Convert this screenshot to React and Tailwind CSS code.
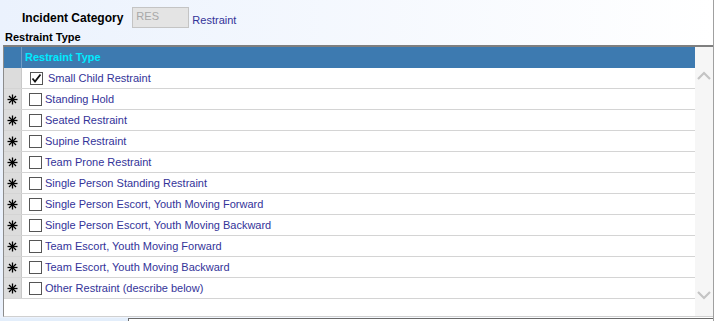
const rows = [
  { label: 'Small Child Restraint', checked: true },
  { label: 'Standing Hold' },
  { label: 'Seated Restraint' },
  { label: 'Supine Restraint' },
  { label: 'Team Prone Restraint' },
  { label: 'Single Person Standing Restraint' },
  { label: 'Single Person Escort, Youth Moving Forward' },
  { label: 'Single Person Escort, Youth Moving Backward' },
  { label: 'Team Escort, Youth Moving Forward' },
  { label: 'Team Escort, Youth Moving Backward' },
  { label: 'Other Restraint (describe below)' },
];

const NewRowMark = () => (
  <svg width="11" height="11" viewBox="0 0 11 11" stroke="#000" strokeWidth="1.3">
    <line x1="5.5" y1="0.5" x2="5.5" y2="10.5" />
    <line x1="0.5" y1="5.5" x2="10.5" y2="5.5" />
    <line x1="2" y1="2" x2="9" y2="9" />
    <line x1="9" y1="2" x2="2" y2="9" />
  </svg>
);

const Check = ({ checked }) => (
  <div className="w-[13px] h-[13px] border border-[#555] bg-white flex items-center justify-center">
    {checked && (
      <svg width="11" height="11" viewBox="0 0 11 11">
        <path d="M1.5 5.5 L4 8.5 L9.5 1.5" fill="none" stroke="#111" strokeWidth="1.8" />
      </svg>
    )}
  </div>
);

const App = () => {
  return (
    <div className="w-[717px] h-[321px] overflow-hidden flex font-['Liberation_Sans',Arial,sans-serif] bg-white">
      <div className="w-[714px] border-r border-[#a0a0a0] bg-gradient-to-r from-[#ebf2fd] to-white flex flex-col">
        {/* Incident category */}
        <div className="flex items-end pt-[7px] pl-[22px] h-[28px]">
          <span className="text-[12px] font-bold text-black leading-[20px] mr-[9px]">Incident Category</span>
          <div className="w-[57px] h-[21px] bg-[#e4e4e4] border border-[#c4c4c4] text-[11px] text-[#a8a8a8] pl-[3px] leading-[17px] self-start">
            RES
          </div>
          <span className="text-[11px] text-[#333399] ml-[3px] leading-[16px]">Restraint</span>
        </div>

        <div className="text-[11px] font-bold text-black pl-[5px] leading-[15px] h-[15px] mt-[2px]">Restraint Type</div>

        {/* Grid */}
        <div className="ml-[3px] w-[710px] h-[272px] border-t-2 border-[#7f7f7f] border-l border-l-[#8c8c8c] border-b border-b-[#d0d0d0] flex bg-white">
          <div className="flex-1 flex flex-col">
            <div className="h-[21px] bg-[#3d7ab0] flex items-center">
              <div className="w-[18px] h-full border-r border-[#6f9cc6]" />
              <span className="text-[11px] font-bold text-[#00eaff] pl-[3px]">Restraint Type</span>
            </div>
            {rows.map((r, i) => (
              <div key={i} className="h-[21px] flex border-b border-[#d4d4d4]">
                <div className="w-[18px] h-full bg-[#dcdcdc] border-r border-[#c8c8c8] flex items-center justify-center">
                  {!r.checked && <NewRowMark />}
                </div>
                <div className={`flex items-center ${r.checked ? 'pl-[8px]' : 'pl-[7px]'}`}>
                  <Check checked={r.checked} />
                  <span className={`text-[11px] text-[#333399] ${r.checked ? 'ml-[5px]' : 'ml-[3px]'}`}>{r.label}</span>
                </div>
              </div>
            ))}
          </div>
          <div className="w-[18px] bg-[#f6f6f6] flex flex-col items-center justify-between pt-[24px] pb-[16px]">
            <svg width="14" height="9" viewBox="0 0 14 9">
              <path d="M1 8 L7 2 L13 8" fill="none" stroke="#c4c4c4" strokeWidth="2.2" />
            </svg>
            <svg width="14" height="9" viewBox="0 0 14 9">
              <path d="M1 1 L7 7 L13 1" fill="none" stroke="#c4c4c4" strokeWidth="2.2" />
            </svg>
          </div>
        </div>

        {/* Bottom strip */}
        <div className="flex flex-1 mt-[1px]">
          <div className="w-[128px] bg-[#e3eefb]" />
          <div className="flex-1 border-t border-l border-[#6a6a6a] bg-white" />
        </div>
      </div>
    </div>
  );
};

export default App;
